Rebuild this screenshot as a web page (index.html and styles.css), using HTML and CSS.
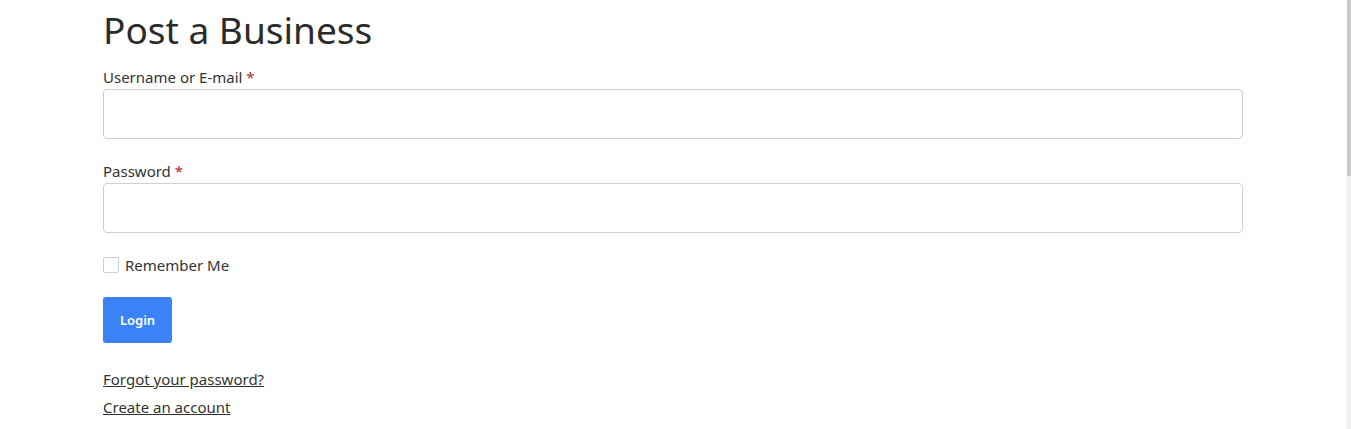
FILE: index.html
```html
<!DOCTYPE html>
<html lang="en">
<head>
<meta charset="utf-8">
<title>Post a Business</title>
<link rel="stylesheet" href="styles.css">
</head>
<body>
<div class="page">
  <main class="main">
    <div class="container">
      <h1 class="title">Post a Business</h1>
      <form class="login-form">
        <div class="field">
          <label class="label" for="user">Username or E-mail <span class="req">*</span></label>
          <input class="input" id="user" type="text">
        </div>
        <div class="field">
          <label class="label" for="pass">Password <span class="req">*</span></label>
          <input class="input" id="pass" type="password">
        </div>
        <label class="check">
          <span class="box"></span>
          <span class="check-text">Remember Me</span>
        </label>
        <button class="btn" type="button">Login</button>
        <div class="links">
          <a class="link" href="#">Forgot your password?</a>
          <a class="link" href="#">Create an account</a>
        </div>
      </form>
    </div>
  </main>
  <div class="scrollbar">
    <div class="thumb"></div>
    <div class="track"></div>
  </div>
</div>
</body>
</html>
```
FILE: styles.css
```css
* { box-sizing: border-box; }
html, body { margin: 0; padding: 0; background: #fff; }
body {
  font-family: "Noto Sans", "Open Sans", sans-serif;
  color: #333;
  font-size: 16px;
  overflow: hidden;
}
.page {
  display: flex;
  height: 429px;
}
.main {
  flex: 1;
  min-width: 0;
  padding-right: 1px;
}
.container {
  width: 1140px;
  margin: 0 auto;
}
.title {
  margin: 0 0 9px;
  padding-top: 6px;
  font-size: 37px;
  font-weight: 400;
  line-height: 48px;
  color: #2b2b2b;
}
.login-form {
  display: flex;
  flex-direction: column;
  align-items: flex-start;
}
.field {
  display: flex;
  flex-direction: column;
  width: 100%;
  margin-bottom: 18px;
}
.label {
  font-size: 15px;
  line-height: 24px;
  padding-top: 2px;
}
.req { color: #b0272c; }
.input {
  width: 100%;
  height: 50px;
  border: 1px solid #cfcfcf;
  border-radius: 4px;
  background: #fff;
}
.check {
  display: flex;
  align-items: center;
  gap: 6px;
  margin-top: 2px;
  font-size: 15px;
  line-height: 24px;
}
.box {
  width: 16px;
  height: 16px;
  border: 1px solid #cfcfcf;
  border-radius: 2px;
  background: #fff;
}
.btn {
  margin-top: 20px;
  width: 69px;
  height: 46px;
  border: 0;
  border-radius: 3px;
  background: #3b82f6;
  color: #fff;
  font-family: inherit;
  font-size: 13px;
  font-weight: 600;
}
.links {
  display: flex;
  flex-direction: column;
  margin-top: 22px;
}
.link {
  color: #333;
  text-decoration: underline;
  font-size: 15px;
  line-height: 28px;
}
.scrollbar {
  width: 4px;
  display: flex;
  flex-direction: column;
}
.thumb {
  height: 176px;
  background: #c8c8c8;
}
.track {
  flex: 1;
  background: #f0f0f0;
}
```
